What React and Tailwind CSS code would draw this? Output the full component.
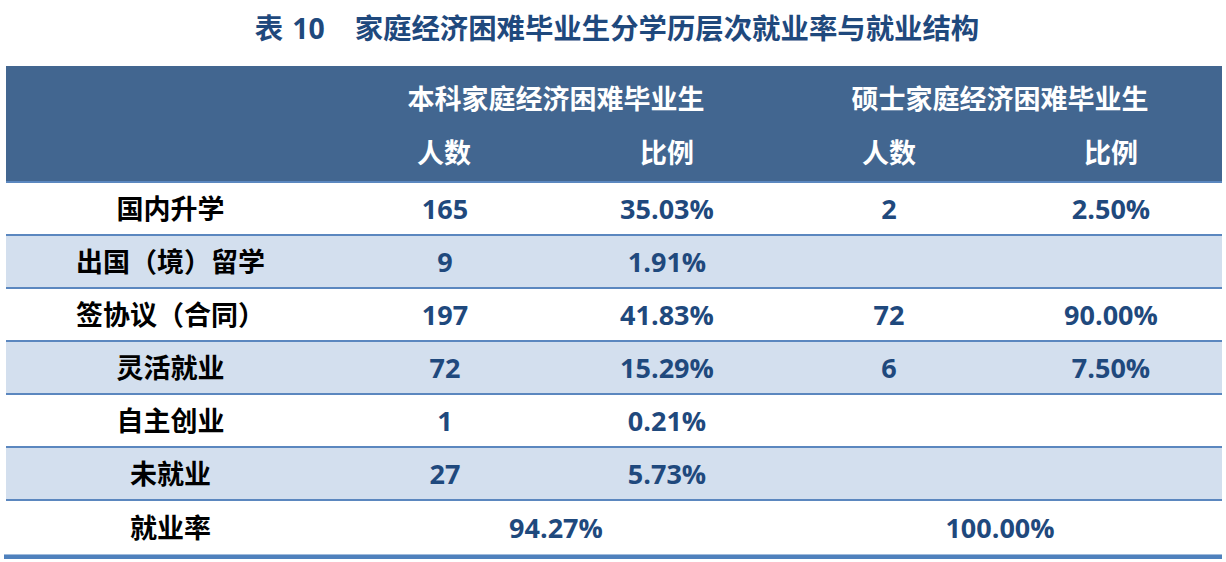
import React from "react";

const rows = [
  ["国内升学", "165", "35.03%", "2", "2.50%"],
  ["出国（境）留学", "9", "1.91%", "", ""],
  ["签协议（合同）", "197", "41.83%", "72", "90.00%"],
  ["灵活就业", "72", "15.29%", "6", "7.50%"],
  ["自主创业", "1", "0.21%", "", ""],
  ["未就业", "27", "5.73%", "", ""],
];

const font = { fontFamily: '"Open Sans", "Noto Sans CJK SC", sans-serif' };

export default function App() {
  return (
    <div className="w-[1226px] h-[562px] bg-white overflow-hidden" style={font}>
      <div className="h-[66px] flex items-center justify-center pb-[10px] pl-[8px]">
        <div className="text-[28.4px] font-bold text-[#1f497d] leading-none flex items-center">
          <span>表</span>
          <span className="ml-[9px]">10</span>
          <span className="ml-[30px]">家庭经济困难毕业生分学历层次就业率与就业结构</span>
        </div>
      </div>
      <div className="ml-[6px] w-[1216px]">
        {/* header */}
        <div className="bg-[#426690] text-white text-[27px] font-bold border-b-2 border-[#5b87bf]">
          <div className="grid grid-cols-[328px_444px_444px] h-[58px] items-center leading-none">
            <div />
            <div className="text-center pt-[6px]">本科家庭经济困难毕业生</div>
            <div className="text-center pt-[6px]">硕士家庭经济困难毕业生</div>
          </div>
          <div className="grid grid-cols-[328px_222px_222px_222px_222px] h-[57px] items-center leading-none">
            <div />
            <div className="text-center pr-[2px]">人数</div>
            <div className="text-center">比例</div>
            <div className="text-center">人数</div>
            <div className="text-center">比例</div>
          </div>
        </div>
        {/* body */}
        {rows.map((r, i) => (
          <div
            key={i}
            className={`grid grid-cols-[328px_222px_222px_222px_222px] h-[53px] items-center text-[27px] font-bold leading-none border-b-2 border-[#5b87bf] ${
              i % 2 === 1 ? "bg-[#d3dfee]" : "bg-white"
            }`}
          >
            <div className="text-center text-black pl-[1px]">{r[0]}</div>
            <div className="text-center text-[#1f497d]">{r[1]}</div>
            <div className="text-center text-[#1f497d]">{r[2]}</div>
            <div className="text-center text-[#1f497d]">{r[3]}</div>
            <div className="text-center text-[#1f497d]">{r[4]}</div>
          </div>
        ))}
        <div className="grid grid-cols-[328px_444px_444px] h-[53px] items-center text-[27px] font-bold leading-none bg-white">
          <div className="text-center text-black pl-[1px]">就业率</div>
          <div className="text-center text-[#1f497d]">94.27%</div>
          <div className="text-center text-[#1f497d]">100.00%</div>
        </div>
      </div>
      <div className="ml-[4px] w-[1218px] h-[5px] bg-[#4f81bd] border-t border-[#9fbbdc]" />
    </div>
  );
}
